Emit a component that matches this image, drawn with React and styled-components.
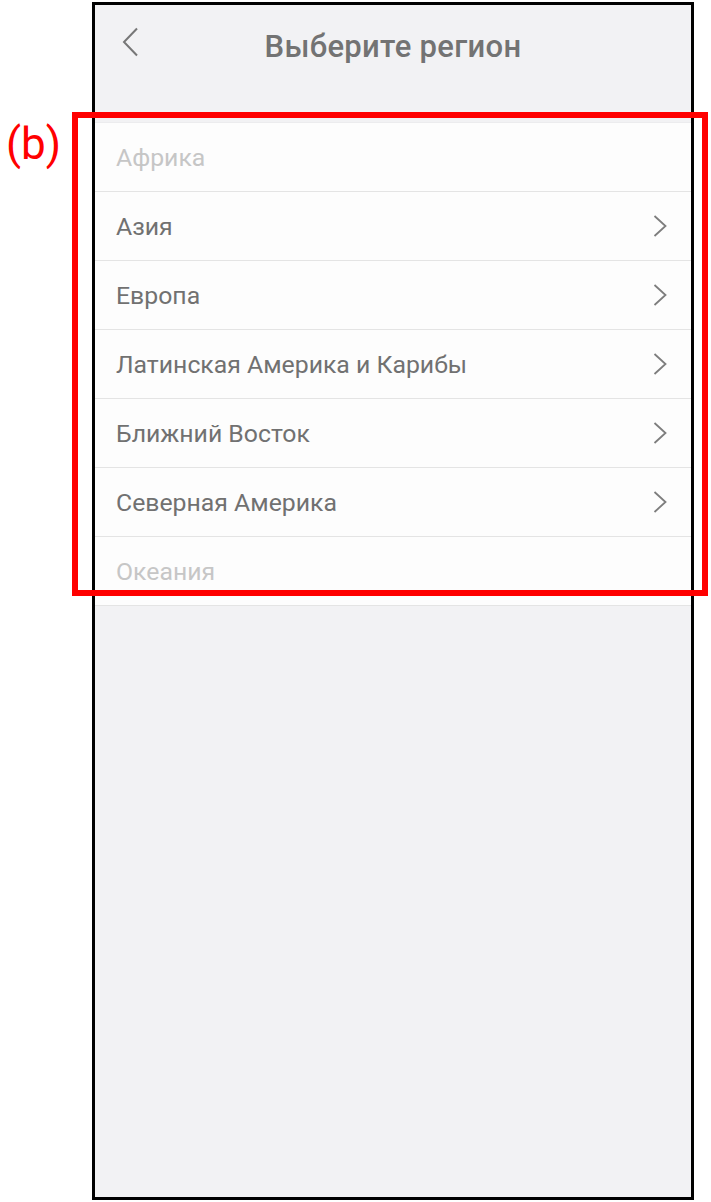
import React from 'react'
import styled, { createGlobalStyle } from 'styled-components'

const Global = createGlobalStyle`
  html, body { margin: 0; padding: 0; background: #ffffff; }
  body { font-family: Roboto, "Noto Sans", "Liberation Sans", sans-serif; }
`

const Page = styled.div`
  position: relative;
  width: 711px;
  height: 1202px;
  padding-top: 2px;
  box-sizing: border-box;
`

const Phone = styled.div`
  margin-left: 92px;
  width: 602px;
  height: 1198px;
  box-sizing: border-box;
  border: 3px solid #000;
  background: #f2f2f4;
  display: flex;
  flex-direction: column;
`

const Header = styled.div`
  height: 82px;
  display: flex;
  align-items: center;
  justify-content: center;
  position: relative;
`

const BackButton = styled.div`
  position: absolute;
  left: 27px;
  top: 22px;
  width: 16px;
  height: 30px;
  display: flex;
`

const Title = styled.h1`
  margin: 0;
  font-size: 31px;
  font-weight: 500;
  color: #737373;
  letter-spacing: 0.3px;
`

const List = styled.ul`
  list-style: none;
  margin: 35px 0 0;
  padding: 0;
  background: #fdfdfd;
  border-top: 1px solid #ececee;
`

const Row = styled.li`
  height: 69px;
  box-sizing: border-box;
  border-bottom: 1px solid #e4e4e4;
  display: flex;
  align-items: center;
  justify-content: space-between;
  padding: 0 24px 0 21px;
`

const Label = styled.span`
  font-size: 24.8px;
  color: ${p => (p.disabled ? '#c6c6c6' : '#717171')};
`

const Marker = styled.div`
  position: absolute;
  left: 72px;
  top: 112px;
  width: 636px;
  height: 484px;
  box-sizing: border-box;
  border: 6px solid #ff0000;
  pointer-events: none;
`

const Tag = styled.div`
  position: absolute;
  left: 6px;
  top: 112px;
  font-family: Roboto, "Liberation Sans", sans-serif;
  font-size: 44px;
  line-height: 64px;
  color: #ff0000;
`

const Chevron = () => (
  <svg width="14" height="22" viewBox="0 0 14 22">
    <polyline points="1.5,1 12.5,11 1.5,21" fill="none" stroke="#7d7d7d" strokeWidth="1.8" />
  </svg>
)

const BackChevron = () => (
  <svg width="16" height="30" viewBox="0 0 16 30">
    <polyline points="15,1.5 2,15 15,28.5" fill="none" stroke="#777" strokeWidth="2" />
  </svg>
)

const regions = [
  { name: 'Африка', disabled: true },
  { name: 'Азия' },
  { name: 'Европа' },
  { name: 'Латинская Америка и Карибы' },
  { name: 'Ближний Восток' },
  { name: 'Северная Америка' },
  { name: 'Океания', disabled: true },
]

export default function App() {
  return (
    <Page>
      <Global />
      <Phone>
        <Header>
          <BackButton><BackChevron /></BackButton>
          <Title>Выберите регион</Title>
        </Header>
        <List>
          {regions.map(r => (
            <Row key={r.name}>
              <Label disabled={r.disabled}>{r.name}</Label>
              {!r.disabled && <Chevron />}
            </Row>
          ))}
        </List>
      </Phone>
      <Marker />
      <Tag>(b)</Tag>
    </Page>
  )
}
